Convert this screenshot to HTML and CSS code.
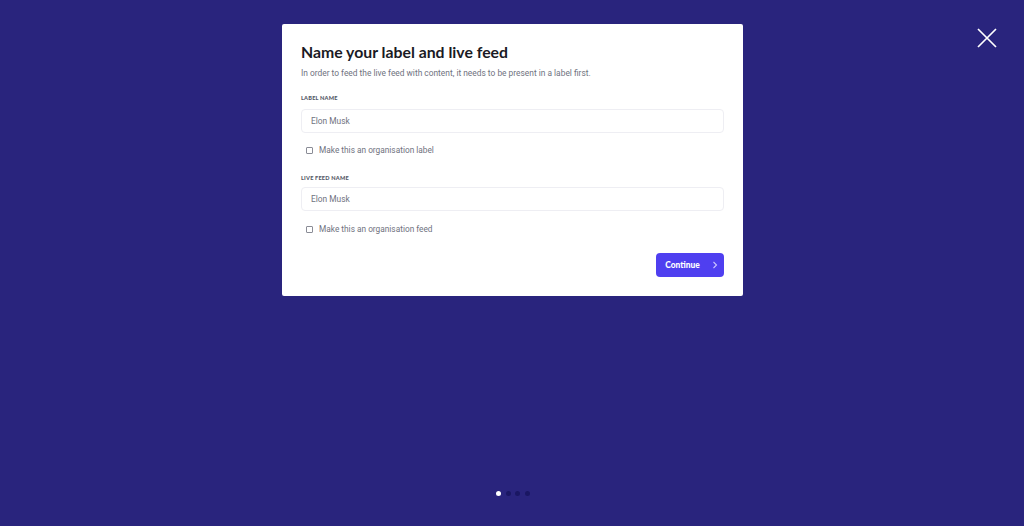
FILE: index.html
```html
<!DOCTYPE html>
<html>
<head>
<meta charset="utf-8">
<link rel="stylesheet" href="styles.css">
</head>
<body>
<div class="screen">
  <button class="close" aria-label="Close">
    <svg width="20" height="20" viewBox="0 0 20 20"><path d="M1 1L19 19M19 1L1 19" stroke="#fff" stroke-width="1.7" fill="none"/></svg>
  </button>
  <div class="modal">
    <h1 class="title">Name your label and live feed</h1>
    <p class="subtitle">In order to feed the live feed with content, it needs to be present in a label first.</p>
    <div class="field first">
      <div class="field-label">LABEL NAME</div>
      <div class="input">Elon Musk</div>
    </div>
    <label class="check"><span class="box"></span>Make this an organisation label</label>
    <div class="field second">
      <div class="field-label">LIVE FEED NAME</div>
      <div class="input">Elon Musk</div>
    </div>
    <label class="check"><span class="box"></span>Make this an organisation feed</label>
    <div class="actions">
      <button class="continue">Continue
        <svg width="6" height="8" viewBox="0 0 6 8"><path d="M1.5 1L4.5 4L1.5 7" stroke="#c9c4ff" stroke-width="1.1" fill="none"/></svg>
      </button>
    </div>
  </div>
  <div class="dots">
    <span class="dot active"></span><span class="dot"></span><span class="dot"></span><span class="dot"></span>
  </div>
</div>
</body>
</html>
```
FILE: styles.css
```css
* { box-sizing: border-box; }
html, body { margin: 0; padding: 0; }
body {
  background: #29247d;
  font-family: Lato, "Liberation Sans", sans-serif;
  width: 1024px;
  height: 526px;
  overflow: hidden;
}
.screen {
  position: relative;
  height: 526px;
  display: flex;
  flex-direction: column;
  align-items: center;
  padding-top: 24px;
}
.close {
  position: absolute;
  top: 28px;
  left: 977px;
  background: none;
  border: 0;
  padding: 0;
  width: 20px;
  height: 20px;
  cursor: pointer;
}
.close svg { display: block; }
.modal {
  width: 461px;
  height: 272px;
  background: #fff;
  border-radius: 2px;
  padding: 19px 19px 0 19px;
  margin-left: 1px;
}
.title {
  margin: 0;
  font-size: 15.8px;
  font-weight: 700;
  color: #1a1a24;
  line-height: 18px;
  letter-spacing: 0;
}
.subtitle {
  margin: 6px 0 0 0;
  font-family: Roboto, sans-serif;
  font-size: 8.4px;
  line-height: 12px;
  color: #6f7280;
}
.field.first { margin-top: 15px; }
.field.second { margin-top: 18px; }
.field-label {
  font-size: 5.6px;
  font-weight: 900;
  color: #555866;
  line-height: 8px;
  letter-spacing: 0.2px;
}
.field.first .input { margin-top: 7px; }
.field.second .input { margin-top: 5px; }
.input {
  height: 24px;
  border: 1px solid #eeeef3;
  border-radius: 4px;
  padding: 0 9px;
  font-family: Roboto, sans-serif;
  font-size: 8.4px;
  color: #6f7280;
  line-height: 22px;
}
.check {
  display: flex;
  align-items: center;
  margin-top: 11px;
  margin-left: 5px;
  font-family: Roboto, sans-serif;
  font-size: 8.3px;
  color: #6f7280;
  line-height: 12px;
}
.field.second + .check { margin-top: 12px; }
.box {
  width: 7px;
  height: 7px;
  border: 1px solid #8a8c96;
  border-radius: 1px;
  margin-right: 6px;
}
.actions {
  display: flex;
  justify-content: flex-end;
  margin-top: 18px;
}
.continue {
  width: 68px;
  height: 24px;
  background: #4f3ff0;
  border: 0;
  border-radius: 4px;
  color: #fff;
  font-family: Lato, sans-serif;
  font-weight: 900;
  font-size: 8.4px;
  display: flex;
  align-items: center;
  justify-content: center;
  gap: 12px;
  padding: 0 0 0 3px;
}
.continue svg { display: block; }
.dots {
  position: absolute;
  top: 491px;
  left: 496px;
  display: flex;
  gap: 4.5px;
}
.dot {
  width: 5px;
  height: 5px;
  border-radius: 50%;
  background: #1a1763;
}
.dot.active { background: #fff; }
```
